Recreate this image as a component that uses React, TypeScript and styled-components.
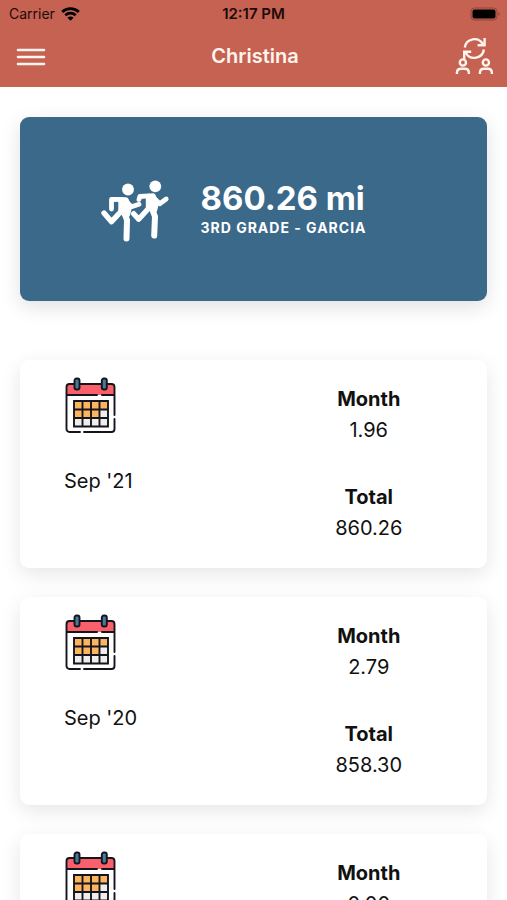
import React from "react";
import styled, { createGlobalStyle } from "styled-components";

const GlobalStyle = createGlobalStyle`
  * { box-sizing: border-box; }
  body {
    margin: 0;
    background: #ffffff;
    color: #111111;
    font-family: Inter, "Liberation Sans", sans-serif;
  }
`;

const Screen = styled.div`
  display: flex;
  flex-direction: column;
  height: 100vh;
  overflow: hidden;
`;

const Header = styled.header`
  flex: none;
  padding-bottom: 3px;
  background: #c66252;
`;

const StatusBar = styled.div`
  display: grid;
  grid-template-columns: 1fr auto 1fr;
  align-items: center;
  height: 28px;
  padding: 0 6px;
  font-size: 14px;
  line-height: 28px;
  color: #1c0b08;
`;

const Carrier = styled.div`
  display: flex;
  align-items: center;
  gap: 6px;
  padding-left: 3px;
`;

const Clock = styled.time`
  font-size: 15px;
  font-weight: 600;
`;

const BatterySlot = styled.div`
  display: flex;
  justify-content: flex-end;
`;

const NavBar = styled.nav`
  display: grid;
  grid-template-columns: 1fr auto 1fr;
  align-items: center;
  height: 56px;
  padding: 0 13px 0 16px;
`;

const Title = styled.h1`
  margin: 0;
  font-size: 20px;
  line-height: 28px;
  font-weight: 600;
  color: #fff4ee;
`;

const IconButton = styled.button<{ $end?: boolean }>`
  display: flex;
  justify-self: ${({ $end }) => ($end ? "end" : "start")};
  padding: 0;
  border: 0;
  background: none;
  color: #fff4ee;
  cursor: pointer;
`;

const Content = styled.main`
  flex: 1;
  min-height: 0;
  overflow-y: auto;
  padding: 30px 20px;
  scrollbar-width: none;
`;

const Summary = styled.section`
  display: flex;
  align-items: center;
  justify-content: center;
  gap: 30px;
  height: 184px;
  padding: 0 40px 2px 0;
  border-radius: 9px;
  background: #3b698a;
  color: #ffffff;
  box-shadow: 0 6px 20px rgba(0, 0, 0, 0.12);
`;

const Distance = styled.div`
  font-size: 33px;
  line-height: 39px;
  font-weight: 700;
`;

const ClassName = styled.div`
  font-size: 14px;
  line-height: 19px;
  font-weight: 700;
  letter-spacing: 1px;
`;

const MonthList = styled.ul`
  display: flex;
  flex-direction: column;
  gap: 29px;
  margin: 59px 0 0;
  padding: 0;
  list-style: none;
`;

const MonthCard = styled.li`
  display: grid;
  grid-template-columns: 1fr 1fr;
  height: 208px;
  padding-right: 2px;
  border-radius: 9px;
  background: #ffffff;
  box-shadow: 0 6px 20px rgba(0, 0, 0, 0.1);
`;

const Period = styled.div`
  display: flex;
  flex-direction: column;
  align-items: flex-start;
  gap: 31px;
  padding: 17px 0 0 44px;
  font-size: 20px;
  line-height: 30px;
`;

const Stats = styled.dl`
  display: flex;
  flex-direction: column;
  gap: 36px;
  margin: 0;
  padding-top: 24px;
  text-align: center;
  font-size: 20px;
  line-height: 31px;
`;

const StatLabel = styled.dt`
  font-weight: 700;
`;

const StatValue = styled.dd`
  margin: 0;
`;

const WifiIcon = () => (
  <svg width="19" height="14" viewBox="0 0 19 14" fill="none" stroke="#000000" strokeWidth="2.8" aria-hidden="true">
    <path d="M1.2 5C5.8.6 13.2.6 17.8 5" />
    <path d="M4.3 8.3C7.2 5.5 11.8 5.5 14.7 8.3" />
    <path d="M9.5 13.7 6.5 10.7C8.2 9.2 10.8 9.2 12.5 10.7Z" fill="#000000" stroke="none" />
  </svg>
);

const BatteryIcon = () => (
  <svg width="31" height="14" viewBox="0 0 31 14" aria-hidden="true">
    <rect x="1" y="1" width="26" height="12" rx="3.5" fill="none" stroke="#8e4539" />
    <rect x="2.5" y="2.5" width="23" height="9" rx="2" fill="#000000" />
    <path d="M28.5 5c1.6.5 1.6 3.5 0 4z" fill="#8e4539" />
  </svg>
);

const MenuIcon = () => (
  <svg width="30" height="20" viewBox="0 0 30 20" stroke="#fff4ee" strokeWidth="2.6" strokeLinecap="round" aria-hidden="true">
    <path d="M2 4h26M2 11h26M2 18h26" />
  </svg>
);

const SwitchUserIcon = () => (
  <svg width="40" height="40" viewBox="0 0 40 40" fill="none" stroke="#fff4ee" strokeWidth="2.4" aria-hidden="true">
    <path d="M10.8 11.5A9.7 9.7 0 0 1 28.8 8M30.6 2v7.2h-7" />
    <path d="M29.9 13.5A9.7 9.7 0 0 1 11.9 17M10.2 23v-7.2h7" />
    <circle cx="8.9" cy="26.5" r="3.1" />
    <circle cx="31.9" cy="26.5" r="3.1" />
    <path d="M2.9 38v-1c0-2.7 1.8-4.2 4.2-4.2h3.6c2.4 0 4.2 1.5 4.2 4.2v1" />
    <path d="M25.9 38v-1c0-2.7 1.8-4.2 4.2-4.2h3.6c2.4 0 4.2 1.5 4.2 4.2v1" />
  </svg>
);

const RunnersIcon = () => (
  <svg width="70" height="68" viewBox="0 -4 70 68" fill="none" stroke="#ffffff" strokeLinecap="round" strokeLinejoin="round" aria-hidden="true">
    <circle cx="28" cy="11.5" r="5.9" fill="#ffffff" stroke="none" />
    <path d="M11.5 31V21.5L22 21.3" strokeWidth="4.8" />
    <path d="M25 22.5l6.5 6.3 7.5-2.5" strokeWidth="4.8" />
    <path d="M21 22l5 0 3 8-1.5 6.5-6.5-2.5z" fill="#ffffff" strokeWidth="5.4" />
    <path d="M20.5 34L11.5 43.7 4 35" strokeWidth="5.4" />
    <path d="M24.5 35.500l2.500 6.500-.5 18.500" strokeWidth="6" />
    <circle cx="55.3" cy="8.3" r="5.9" fill="#ffffff" stroke="none" />
    <path d="M39 21.500l.8-3 9-.7" strokeWidth="4.8" />
    <path d="M53.300 19.500l6.400 6.200 6.500-4.700" strokeWidth="4.800" />
    <path d="M48.500 18.500l4.500-.5 3 8-1.500 6-6-2.500z" fill="#ffffff" strokeWidth="5.400" />
    <path d="M48 31L38.700 41.200l-5-5.500" strokeWidth="5.400" />
    <path d="M52.500 32l2.500 6.500-.8 19" strokeWidth="6" />
  </svg>
);

const CalendarIcon = () => (
  <svg width="54" height="58" viewBox="0 0 54 58" aria-hidden="true">
    <rect x="2.5" y="7" width="48" height="48" rx="3" fill="#ffffff" />
    <path d="M2.5 18V10a3 3 0 0 1 3-3h42a3 3 0 0 1 3 3v8z" fill="#f9606c" />
    <path d="M10 24h34v17H10z" fill="#fdb45f" />
    <path d="M10 41h34v8.5H10zM35.5 32.5H44V41h-8.5z" fill="#eeeeee" />
    <g fill="none" stroke="#15151d" strokeWidth="1.9" strokeLinecap="round">
      <path d="M16 55H5.5a3 3 0 0 1-3-3V10a3 3 0 0 1 3-3h42a3 3 0 0 1 3 3v28M50.5 42v10a3 3 0 0 1-3 3H20M2.5 18H33M38 18h12.5" />
      <path d="M10 24h34v25.5H10zM10 32.5h34M10 41h34M18.5 24v25.5M27 24v25.5M35.5 24v25.5" />
    </g>
    <g fill="#46799a" stroke="#15151d" strokeWidth="1.9">
      <rect x="10.5" y="1.5" width="5" height="11" rx="2" />
      <rect x="37.8" y="1.5" width="5" height="11" rx="2" />
    </g>
  </svg>
);

const months = [
  { period: "Sep '21", month: "1.96", total: "860.26" },
  { period: "Sep '20", month: "2.79", total: "858.30" },
  { period: "Sep '19", month: "0.00", total: "855.51" },
];

export default function App() {
  return (
    <Screen>
      <GlobalStyle />
      <Header>
        <StatusBar>
          <Carrier>
            Carrier
            <WifiIcon />
          </Carrier>
          <Clock>12:17 PM</Clock>
          <BatterySlot>
            <BatteryIcon />
          </BatterySlot>
        </StatusBar>
        <NavBar>
          <IconButton type="button" aria-label="Menu">
            <MenuIcon />
          </IconButton>
          <Title>Christina</Title>
          <IconButton type="button" aria-label="Switch student" $end>
            <SwitchUserIcon />
          </IconButton>
        </NavBar>
      </Header>
      <Content>
        <Summary>
          <RunnersIcon />
          <div>
            <Distance>860.26 mi</Distance>
            <ClassName>3RD GRADE - GARCIA</ClassName>
          </div>
        </Summary>
        <MonthList>
          {months.map(({ period, month, total }) => (
            <MonthCard key={period}>
              <Period>
                <CalendarIcon />
                {period}
              </Period>
              <Stats>
                <div>
                  <StatLabel>Month</StatLabel>
                  <StatValue>{month}</StatValue>
                </div>
                <div>
                  <StatLabel>Total</StatLabel>
                  <StatValue>{total}</StatValue>
                </div>
              </Stats>
            </MonthCard>
          ))}
        </MonthList>
      </Content>
    </Screen>
  );
}
